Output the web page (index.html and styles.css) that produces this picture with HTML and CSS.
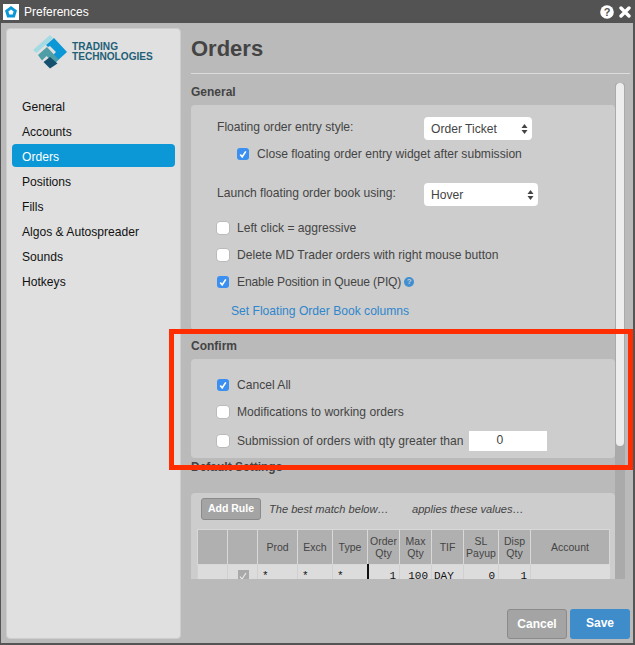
FILE: index.html
```html
<!DOCTYPE html>
<html lang="en">

<head>
    <meta charset="UTF-8">
    <title>Preferences</title>
    <link rel="stylesheet" href="styles.css">
</head>

<body>
    <div class="window">
        <div class="titlebar">
            <span class="app-icon">
                <svg width="16" height="16" viewBox="0 0 16 16">
                    <rect width="16" height="16" fill="#fff"/>
                    <path d="M8 2 L14 6.4 L11.8 13.5 H4.2 L2 6.4 Z" fill="#0c97d6"/>
                    <path d="M8 5.6 L10.6 7.5 L9.6 10.4 H6.4 L5.4 7.5 Z" fill="#fff"/>
                </svg>
            </span>
            <span class="title-text">Preferences</span>
            <span class="title-actions">
                <svg width="14" height="14" viewBox="0 0 14 14">
                    <circle cx="7" cy="7" r="6.8" fill="#fff"/>
                    <text x="7" y="11" text-anchor="middle" class="help-mark">?</text>
                </svg>
                <svg width="12" height="12" viewBox="0 0 12 12">
                    <path d="M2 2 L10 10 M10 2 L2 10" stroke="#fff" stroke-width="3.4" stroke-linecap="round"/>
                </svg>
            </span>
        </div>

        <div class="content">
            <div class="sidebar">
                <div class="logo">
                    <svg width="34" height="34" viewBox="33 35 34 34">
                        <path d="M33 50 L50 35 L53 38 L36.500 53 Z" fill="#a3dbe4"/>
                        <path d="M46 45 L54 38 L67 52 L55 63 L50 58 L56 52 L50 46 L48 47 Z" fill="#0c97d6"/>
                        <path d="M38 55 L47 47 L58.500 59.500 L54 63 L46.500 56 L42 60.500 Z" fill="#4f9da6"/>
                        <path d="M43.500 62 L50 57 L57.500 63.500 L50 68.500 Z" fill="#15506e"/>
                    </svg>
                    <div class="logo-text">TRADING<br>TECHNOLOGIES</div>
                </div>
                <ul class="nav">
                    <li>General</li>
                    <li>Accounts</li>
                    <li class="active">Orders</li>
                    <li>Positions</li>
                    <li>Fills</li>
                    <li>Algos &amp; Autospreader</li>
                    <li>Sounds</li>
                    <li>Hotkeys</li>
                </ul>
            </div>

            <div class="main">
                <h1>Orders</h1>
                <div class="scroll-area">
                    <div class="scroll-content">
                        <h2>General</h2>
                        <div class="panel panel-general">
                            <div class="row select-row">
                                <span class="select-label">Floating order entry style:</span>
                                <span class="select select-ticket">Order Ticket<svg width="7" height="12" viewBox="0 0 7 12"><path d="M3.500 1 L6.500 5 H0.500 Z M3.500 11 L0.500 7 H6.500 Z" fill="#444"/></svg></span>
                            </div>
                            <div class="row check-row nested">
                                <span class="check on"><svg width="12" height="12" viewBox="0 0 12 12"><path d="M3.200 6.400 L5.200 8.800 L8.800 3.400" fill="none" stroke="#fff" stroke-width="1.600"/></svg></span>Close floating order entry widget after submission
                            </div>
                            <div class="row select-row second">
                                <span class="select-label">Launch floating order book using:</span>
                                <span class="select select-hover">Hover<svg width="7" height="12" viewBox="0 0 7 12"><path d="M3.500 1 L6.500 5 H0.500 Z M3.500 11 L0.500 7 H6.500 Z" fill="#444"/></svg></span>
                            </div>
                            <div class="check-list">
                                <div class="row check-row">
                                    <span class="check"></span>Left click = aggressive
                                </div>
                                <div class="row check-row">
                                    <span class="check"></span>Delete MD Trader orders with right mouse button
                                </div>
                                <div class="row check-row tight">
                                    <span class="check on"><svg width="12" height="12" viewBox="0 0 12 12"><path d="M3.200 6.400 L5.200 8.800 L8.800 3.400" fill="none" stroke="#fff" stroke-width="1.600"/></svg></span>Enable Position in Queue (PIQ)
                                    <span class="info">?</span>
                                </div>
                            </div>
                            <div class="row link-row">Set Floating Order Book columns</div>
                        </div>

                        <h2 class="confirm-title">Confirm</h2>
                        <div class="panel panel-confirm">
                            <div class="row check-row nested">
                                <span class="check on"><svg width="12" height="12" viewBox="0 0 12 12"><path d="M3.200 6.400 L5.200 8.800 L8.800 3.400" fill="none" stroke="#fff" stroke-width="1.600"/></svg></span>Cancel All
                            </div>
                            <div class="row check-row nested">
                                <span class="check"></span>Modifications to working orders
                            </div>
                            <div class="row check-row nested qty-row">
                                <span class="check"></span>Submission of orders with qty greater than
                                <span class="qty-input">0</span>
                            </div>
                        </div>

                        <h2 class="defaults-title">Default Settings</h2>
                        <div class="panel panel-rules">
                            <div class="rule-bar">
                                <span class="add-rule">Add Rule</span>
                                <em class="hint-match">The best match below…</em>
                                <em>applies these values…</em>
                            </div>
                            <table class="rules">
                                <tr>
                                    <th class="c-a"></th>
                                    <th class="c-b"></th>
                                    <th class="c-prod">Prod</th>
                                    <th class="c-exch">Exch</th>
                                    <th class="c-type">Type</th>
                                    <th class="c-order">Order<br>Qty</th>
                                    <th class="c-max">Max<br>Qty</th>
                                    <th class="c-tif">TIF</th>
                                    <th class="c-sl">SL<br>Payup</th>
                                    <th class="c-disp">Disp<br>Qty</th>
                                    <th class="c-acct">Account</th>
                                </tr>
                                <tr>
                                    <td></td>
                                    <td class="mid"><span class="grey-check"><svg width="10" height="10" viewBox="0 0 10 10"><path d="M2 5.500 L4 8 L8 2" fill="none" stroke="#e8e8e8" stroke-width="1.200"/></svg></span></td>
                                    <td>*</td>
                                    <td>*</td>
                                    <td class="edge">*</td>
                                    <td class="num">1</td>
                                    <td class="num">100</td>
                                    <td class="tif">DAY</td>
                                    <td class="num">0</td>
                                    <td class="num">1</td>
                                    <td></td>
                                </tr>
                            </table>
                        </div>
                    </div>
                    <div class="scrollbar"><div class="thumb"></div></div>
                </div>
                <div class="footer">
                    <span class="btn btn-cancel">Cancel</span>
                    <span class="btn btn-save">Save</span>
                </div>
            </div>
        </div>
        <div class="callout"></div>
    </div>
</body>

</html>
```

FILE: styles.css
```css
* {
    box-sizing: border-box;
}

html, body {
    margin: 0;
    height: 100%;
    overflow: hidden;
}

body {
    font-family: "Liberation Sans", Arial, sans-serif;
    font-size: 12px;
    color: #444;
}

.window {
    position: relative;
    height: 645px;
    display: flex;
    flex-direction: column;
    background: #bababa;
    border-left: 1px solid #555;
    border-right: 2px solid #555;
    border-bottom: 2px solid #555;
}

.titlebar {
    height: 23px;
    flex: none;
    margin: 0 -2px 0 -1px;
    padding: 0 4px 0 3px;
    display: flex;
    align-items: center;
    background: #535353;
    color: #fff;
}

.app-icon {
    width: 16px;
    height: 16px;
    display: flex;
}

.title-text {
    margin-left: 5px;
    font-size: 12px;
}

.title-actions {
    margin-left: auto;
    display: flex;
    align-items: center;
    gap: 5px;
}

.help-mark {
    font-size: 11px;
    font-weight: bold;
    fill: #535353;
    font-family: "Liberation Sans", Arial, sans-serif;
}

.content {
    flex: 1;
    min-height: 0;
    display: flex;
    padding: 5px 3px 4px 5px;
}

.sidebar {
    width: 175px;
    flex: none;
    padding: 0 5px;
    background: #e0e0e0;
    border: 1px solid #cdcdcd;
    border-radius: 4px;
}

.logo {
    display: flex;
    align-items: center;
    gap: 5px;
    height: 34px;
    margin-top: 6px;
    padding-left: 21px;
}

.logo-text {
    font-size: 10.1px;
    line-height: 10px;
    font-weight: bold;
    color: #1f5f78;
}

.nav {
    list-style: none;
    margin: 25px 0 0;
    padding: 0;
}

.nav li {
    height: 23px;
    margin-bottom: 2px;
    padding-left: 10px;
    line-height: 26px;
    font-size: 12.1px;
    color: #111;
    border-radius: 4px;
}

.nav .active {
    background: #0c97d6;
    color: #fff;
}

.main {
    flex: 1;
    min-width: 0;
    display: flex;
    flex-direction: column;
    margin-left: 10px;
}

h1 {
    height: 46px;
    margin: 0;
    padding-top: 7px;
    font-size: 22px;
    line-height: 28px;
    color: #444;
    border-bottom: 1px solid #dcdcdc;
}

.scroll-area {
    position: relative;
    flex: none;
    height: 505px;
    overflow: hidden;
    margin-right: 5px;
}

.scroll-content {
    width: 424px;
}

h2 {
    margin: 0;
    font-size: 12px;
    line-height: 14px;
    color: #444;
}

.scroll-content > h2:first-child {
    padding-top: 11px;
    height: 31px;
}

.confirm-title {
    margin-top: 9px;
    height: 20px;
}

.defaults-title {
    margin-top: 2px;
    height: 33px;
}

.panel {
    background: #cdcdcd;
    border-radius: 4px;
}

.panel-general {
    height: 225px;
    padding: 12px 26px 0;
}

.panel-confirm {
    height: 99px;
    padding-top: 12px;
}

.panel-rules {
    height: 120px;
    padding: 5px 6px;
}

.row {
    display: flex;
    align-items: center;
    font-size: 12.1px;
}

.select-row {
    height: 23px;
}

.select-row.second {
    margin-top: 16px;
}

.select-label {
    width: 207px;
    margin-bottom: 4px;
}

.select {
    height: 23px;
    display: flex;
    align-items: center;
    justify-content: space-between;
    padding: 0 4px 0 7px;
    background: #fff;
    border-radius: 4px;
}

.select-ticket {
    width: 108px;
}

.select-hover {
    width: 114px;
}

.check-list {
    margin-top: 8px;
}

.check-row {
    height: 27px;
}

.check-row.nested {
    padding-left: 26px;
}

.panel-general .check-row.nested {
    height: 26px;
    margin-top: 1px;
    padding-left: 20px;
}

.check-row.qty-row {
    height: 31px;
}

.check-row.tight {
    letter-spacing: -0.15px;
}

.check {
    width: 12px;
    height: 12px;
    flex: none;
    display: flex;
    margin-right: 8px;
    background: #fff;
    border-radius: 3px;
    box-shadow: 0 0 0 0.5px #aaa;
}

.check.on {
    background: #3a8ff0;
    box-shadow: none;
}

.info {
    width: 10px;
    height: 10px;
    margin-left: 3px;
    border-radius: 50%;
    background: #3f8fd2;
    color: #cdcdcd;
    font-size: 8px;
    font-weight: bold;
    line-height: 10px;
    text-align: center;
}

.link-row {
    margin-top: 9px;
    padding-left: 14px;
    color: #2f86cc;
}

.qty-input {
    width: 78px;
    height: 20px;
    margin-left: 5px;
    padding-left: 28px;
    background: #fff;
    line-height: 18px;
}

.rule-bar {
    display: flex;
    align-items: center;
    height: 22px;
    padding-left: 4px;
    font-size: 11.1px;
}

.add-rule {
    width: 60px;
    height: 22px;
    background: #a4a4a4;
    border: 1px solid #8a8a8a;
    border-radius: 3px;
    color: #fff;
    font-size: 10.500px;
    font-weight: bold;
    text-align: center;
    line-height: 19px;
}

.hint-match {
    margin-left: 8px;
    width: 143px;
}

.rules {
    margin-top: 9px;
    border-collapse: collapse;
    table-layout: fixed;
    width: 412px;
    font-size: 10.500px;
}

.rules th {
    height: 35px;
    padding: 0;
    background: #b0b0b0;
    border: 1px solid #d8d8d8;
    font-weight: normal;
    line-height: 12px;
    color: #444;
    overflow: hidden;
}

.rules td {
    height: 24px;
    padding: 5px 3px 0 4px;
    background: #dcdcdc;
    border-left: 1px solid #d0d0d0;
    vertical-align: top;
    color: #111;
    font-family: "Liberation Mono", monospace;
    font-size: 11px;
}

.rules .num {
    text-align: right;
}

.rules .mid {
    text-align: center;
}

.rules .tif {
    padding-left: 2px;
}

.rules .edge {
    border-right: 2px solid #111;
}

.grey-check {
    display: inline-flex;
    align-items: center;
    justify-content: center;
    width: 11px;
    height: 11px;
    background: #a9a9a9;
}

.c-a, .c-b { width: 30px; }
.c-prod { width: 40px; }
.c-exch, .c-type { width: 35px; }
.c-order, .c-max, .c-tif, .c-disp { width: 32px; }
.c-sl { width: 35px; }
.c-acct { width: 79px; }

.scrollbar {
    position: absolute;
    top: 9px;
    right: 0;
    bottom: 0;
    width: 10px;
    background: #aaa;
    border-radius: 2px 2px 0 0;
}

.thumb {
    width: 8px;
    height: 363px;
    margin-left: 1px;
    background: #ededed;
    border-radius: 4px;
}

.footer {
    flex: 1;
    display: flex;
    justify-content: flex-end;
    align-items: flex-end;
    gap: 3px;
}

.btn {
    width: 60px;
    height: 30px;
    color: #fff;
    font-weight: bold;
    text-align: center;
    line-height: 28px;
    border-radius: 3px;
}

.btn-cancel {
    background: #a4a4a4;
    border: 1px solid #8a8a8a;
}

.btn-save {
    background: #3f8ccb;
}

.callout {
    position: absolute;
    left: 168px;
    top: 329px;
    width: 464px;
    height: 141px;
    border: 5px solid #ff2d00;
}
```
